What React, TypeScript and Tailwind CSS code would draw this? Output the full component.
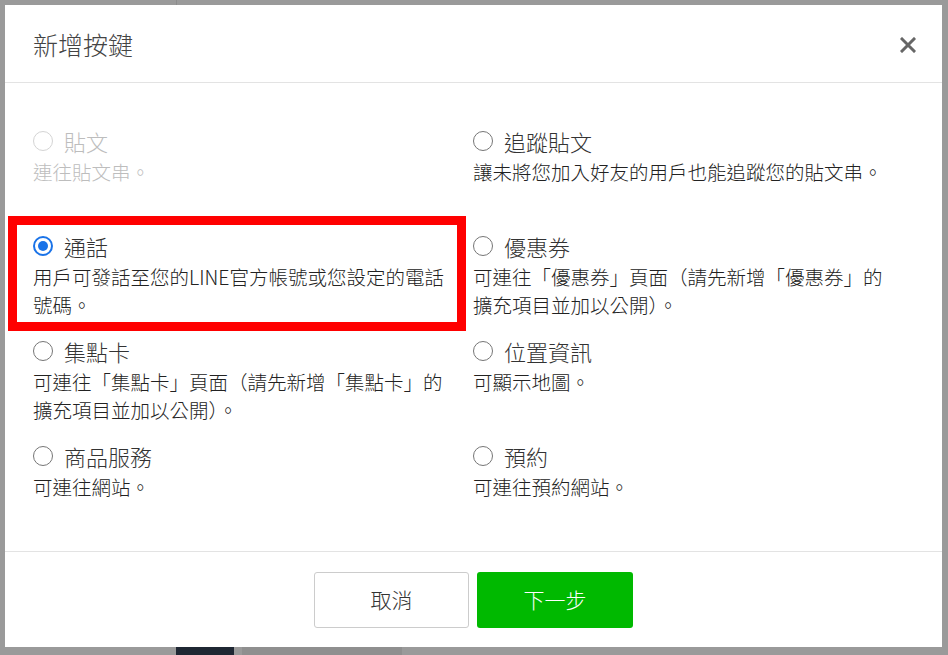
import React from "react";

type Option = {
  label: string;
  desc: string;
  disabled?: boolean;
  checked?: boolean;
};

const options: Option[] = [
  { label: "貼文", desc: "連往貼文串。", disabled: true },
  { label: "追蹤貼文", desc: "讓未將您加入好友的用戶也能追蹤您的貼文串。" },
  { label: "通話", desc: "用戶可發話至您的LINE官方帳號或您設定的電話號碼。", checked: true },
  { label: "優惠券", desc: "可連往「優惠券」頁面（請先新增「優惠券」的擴充項目並加以公開）。" },
  { label: "集點卡", desc: "可連往「集點卡」頁面（請先新增「集點卡」的擴充項目並加以公開）。" },
  { label: "位置資訊", desc: "可顯示地圖。" },
  { label: "商品服務", desc: "可連往網站。" },
  { label: "預約", desc: "可連往預約網站。" },
];

const font = { fontFamily: '"Noto Sans CJK TC", "Noto Sans", sans-serif' };

function Radio({ checked, disabled }: { checked?: boolean; disabled?: boolean }) {
  if (checked) {
    return (
      <span className="flex h-[20px] w-[20px] shrink-0 items-center justify-center rounded-full border-2 border-[#1a73e8] bg-white">
        <span className="h-[10px] w-[10px] rounded-full bg-[#1a73e8]" />
      </span>
    );
  }
  return (
    <span
      className={`h-[20px] w-[20px] shrink-0 rounded-full border bg-white ${
        disabled ? "border-[#d4d4d4]" : "border-[#767676]"
      }`}
    />
  );
}

function OptionCell({ opt }: { opt: Option }) {
  const muted = opt.disabled;
  return (
    <div className="h-[105px] pr-[14px]">
      <div className="flex h-[30px] items-center gap-[11px]">
        <Radio checked={opt.checked} disabled={opt.disabled} />
        <span className={`text-[22px] font-light leading-[30px] ${muted ? "text-[#bdbdbd]" : "text-[#333]"}`}>
          {opt.label}
        </span>
      </div>
      <p className={`mt-[2px] text-[19.5px] font-light leading-[28px] ${muted ? "text-[#bdbdbd]" : "text-[#222]"}`}>
        {opt.desc}
      </p>
    </div>
  );
}

export default function App() {
  return (
    <div className="h-[655px] w-[948px] overflow-hidden bg-[#9a9a9a]" style={font}>
      <div className="h-[5px] w-full">
        <div className="ml-[176px] h-full w-px bg-[#8c8c8c]" />
      </div>
      <div className="relative ml-[5px] flex h-[642px] w-[937px] flex-col bg-white">
        <div className="flex h-[78px] items-center justify-between border-b border-[#e3e3e3] pl-[28px] pr-[26px]">
          <h2 className="mt-[3px] text-[25px] font-light text-[#444]">新增按鍵</h2>
          <svg width="16" height="16" viewBox="0 0 16 16" className="mt-[2px]">
            <path d="M2 2L14 14M14 2L2 14" stroke="#666" strokeWidth="3" strokeLinecap="square" />
          </svg>
        </div>

        <div className="flex-1 pl-[28px] pt-[43px]">
          <div className="grid grid-cols-[440px_440px]">
            {options.map((opt) => (
              <OptionCell key={opt.label} opt={opt} />
            ))}
          </div>
        </div>

        <div className="flex h-[96px] items-center justify-center gap-[8px] border-t border-[#e3e3e3]">
          <button className="h-[56px] w-[155px] rounded-[3px] border border-[#cccccc] bg-white text-[21px] font-light text-[#333]">
            取消
          </button>
          <button className="h-[56px] w-[156px] rounded-[3px] bg-[#00b900] text-[21px] font-light text-white">
            下一步
          </button>
        </div>

        <div className="pointer-events-none absolute left-[3px] top-[211px] h-[115px] w-[458px] border-[9px] border-[#ff0000]" />
      </div>
      <div className="flex h-[8px] w-full">
        <div className="ml-[176px] h-full w-[58px] bg-[#1f2733]" />
        <div className="ml-[8px] h-full w-[160px] bg-[#8f8f8f]" />
      </div>
    </div>
  );
}
